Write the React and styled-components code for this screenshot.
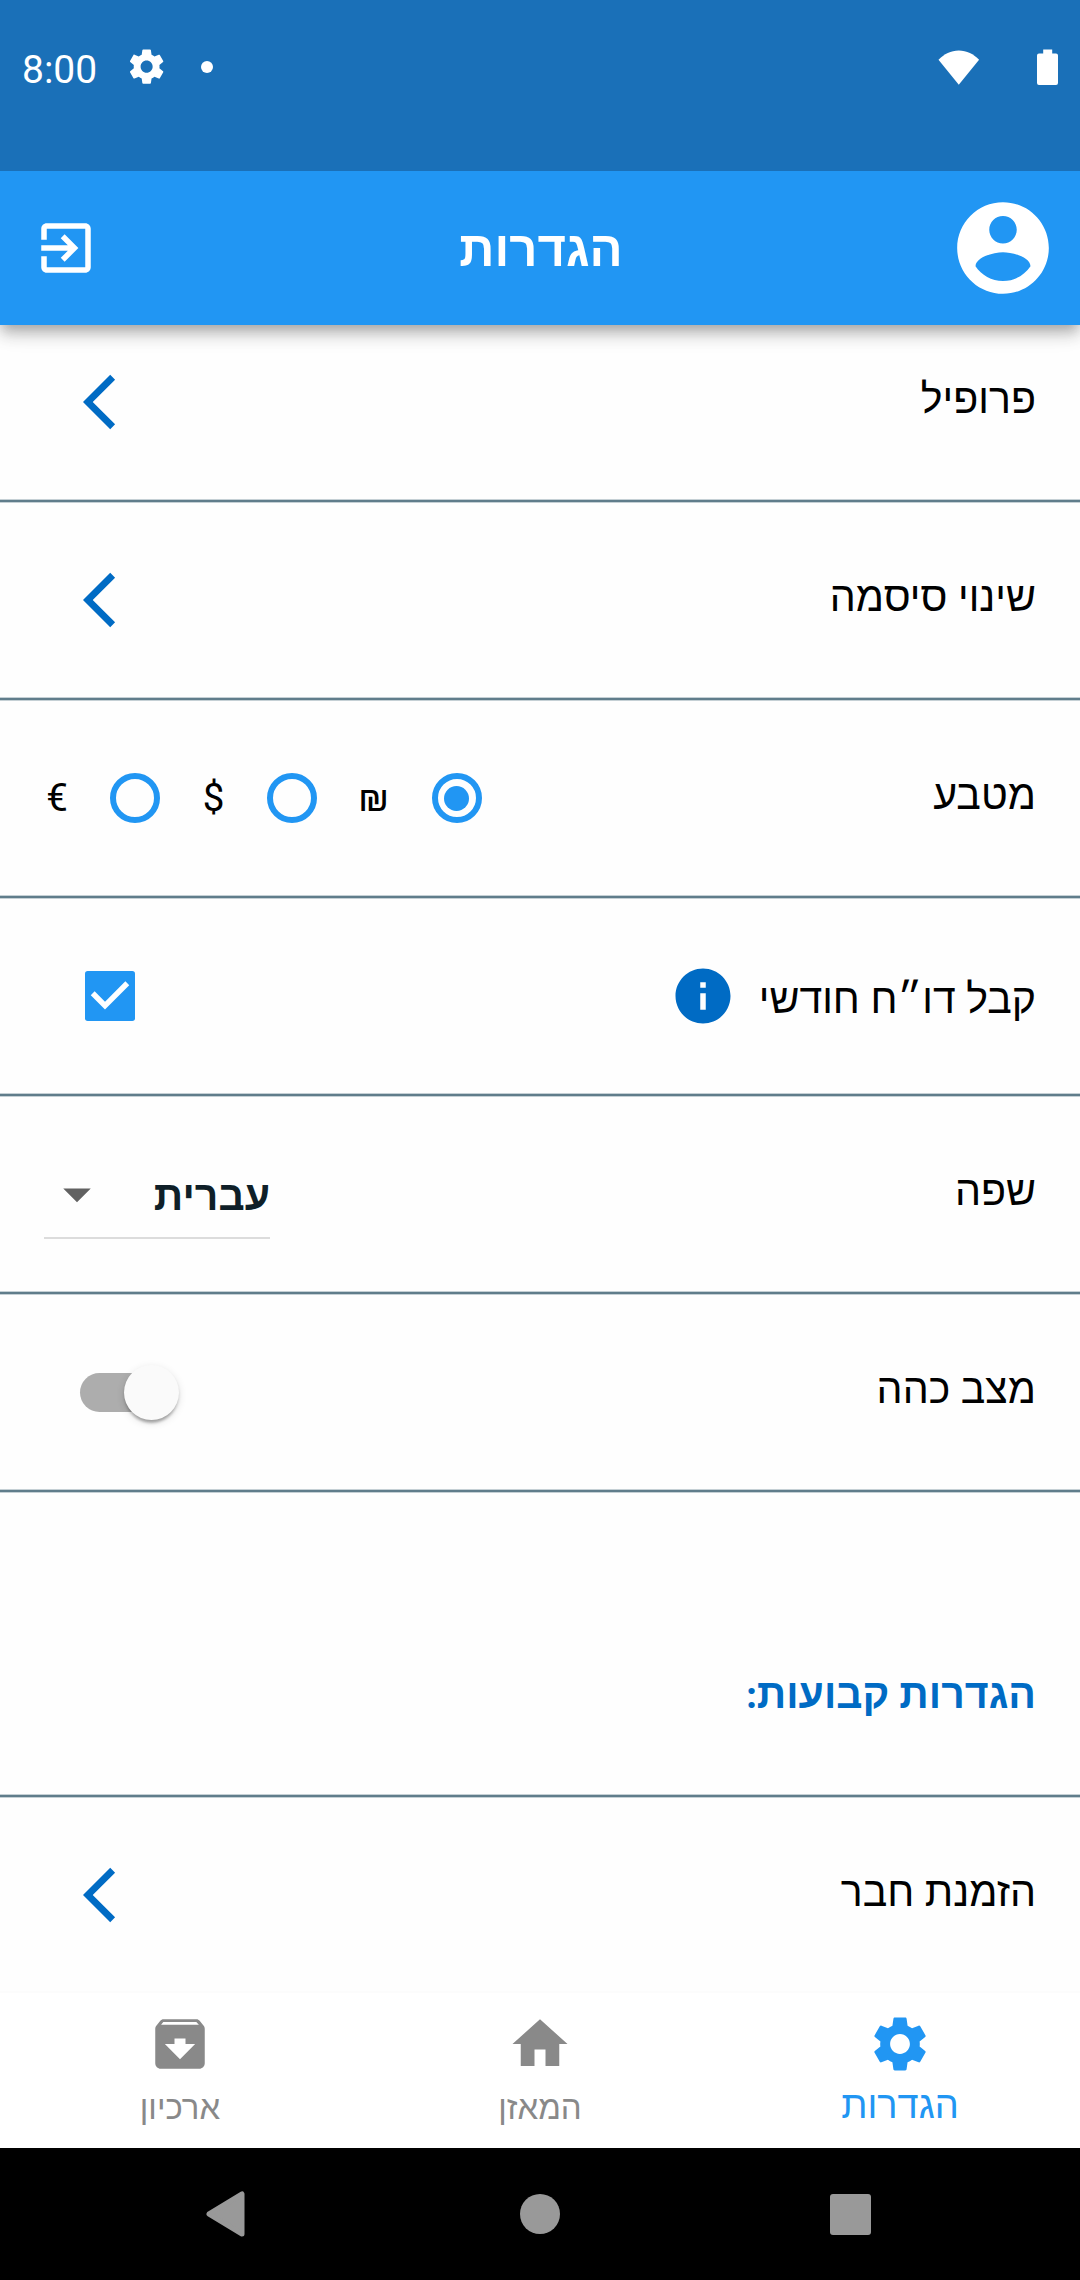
import React from "react";
import styled, { createGlobalStyle } from "styled-components";

const GlobalStyle = createGlobalStyle`
  * { box-sizing: border-box; }
  body { margin: 0; background: #fff; }
`;

const Screen = styled.div`
  width: 1080px;
  height: 2280px;
  overflow: hidden;
  display: flex;
  flex-direction: column;
  background: #fefefe;
  color: #000;
  font-family: Lato, sans-serif;
  direction: rtl;
`;

const StatusBar = styled.div`
  height: 171px;
  flex: none;
  position: relative;
  z-index: 2;
  direction: ltr;
  background: #1a70b8;
  color: #fff;
  display: flex;
  align-items: flex-start;
  justify-content: space-between;
  padding: 46px 22px 0 22px;
`;

const StatusGroup = styled.div`
  height: 42px;
  display: flex;
  align-items: center;
`;

const Clock = styled.span`
  font: 400 39px/42px Roboto, sans-serif;
  width: 104px;
  padding-top: 6px;
`;

const Dot = styled.span`
  width: 12px;
  height: 12px;
  margin-left: 34px;
  border-radius: 50%;
  background: #fff;
`;

const Icon = styled.svg`
  display: block;
  flex: none;
  width: ${(p) => p.$size || 66}px;
  height: ${(p) => p.$size || 66}px;
  fill: currentColor;
`;

const AppBar = styled.header`
  height: 154px;
  flex: none;
  z-index: 1;
  display: grid;
  grid-template-columns: 110px 1fr 110px;
  align-items: center;
  padding: 0 22px;
  background: #2196f3;
  color: #fff;
  box-shadow: 0 5.5px 11px -2.75px rgba(0, 0, 0, 0.2), 0 11px 13.75px rgba(0, 0, 0, 0.14),
    0 2.75px 27.5px rgba(0, 0, 0, 0.12);
`;

const Title = styled.h1`
  margin: 0;
  padding: 0 0 2px 2px;
  text-align: center;
  font-size: 49px;
  font-weight: 700;
  line-height: 76px;
`;

const ExitSlot = styled.div`
  display: flex;
  justify-content: flex-end;
  padding-left: 11px;
`;

const List = styled.main`
  flex: 1;
  min-height: 0;
  overflow: hidden;
  display: flex;
  flex-direction: column;

  /* The list is scrolled slightly under the app bar. */
  > :first-child {
    margin-top: -20px;
  }
`;

const Row = styled.section`
  height: 198px;
  flex: none;
  display: flex;
  align-items: center;
  justify-content: space-between;
  padding: 0 44px 4px;
  background: linear-gradient(#c5d0d5 0 1px, #607d8b 1px 3px, #c5d0d5 3px 4px) bottom / 100% 4px no-repeat;
`;

const HeadingRow = styled(Row)`
  height: 305px;
  align-items: flex-end;
  padding-bottom: 75px;
`;

const Label = styled.span`
  font-size: 41.1px;
  line-height: 60px;
  padding-bottom: 10px;
  white-space: nowrap;
`;

const Heading = styled.h2`
  margin: 0;
  font-size: 41px;
  line-height: 60px;
  font-weight: 700;
  color: #006bc4;
`;

const LabelGroup = styled.div`
  display: flex;
  align-items: center;
  gap: 23px;

  ${Label} {
    padding: 1px 0 0;
  }
`;

const Accent = styled.span`
  color: #006bc4;
  margin-left: ${(p) => p.$inset || 0}px;
`;

const RadioGroup = styled.div`
  display: flex;
  align-items: center;
`;

const Radio = styled.span`
  width: 50px;
  height: 50px;
  border: 6px solid #2196f3;
  border-radius: 50%;
  display: grid;
  place-items: center;

  &::after {
    content: "";
    width: 25px;
    height: 25px;
    border-radius: 50%;
    background: ${(p) => (p.$on ? "#2196f3" : "transparent")};
  }
`;

const Currency = styled.span`
  width: ${(p) => p.$width}px;
  margin: 0 ${(p) => p.$before}px 0 ${(p) => p.$after}px;
  text-align: center;
  font: 400 38.5px/50px Roboto, sans-serif;
`;

const Checkbox = styled.span`
  width: 50px;
  height: 50px;
  margin-left: 41px;
  border-radius: 2.75px;
  background: #2196f3;
`;

const Select = styled.div`
  width: 226px;
  height: 88px;
  margin-top: 2px;
  display: flex;
  align-items: center;
  justify-content: space-between;
  border-bottom: 2px solid #dcdcdc;
  color: #0f1f28;
`;

const SelectValue = styled.span`
  padding-top: 2px;
  font-size: 41px;
  line-height: 60px;
  font-weight: 700;
`;

const Caret = styled.span`
  color: #616161;
`;

const Track = styled.span`
  width: 91px;
  height: 39px;
  margin-left: 35.5px;
  border-radius: 20px;
  background: #adadad;
  display: flex;
  align-items: center;
  justify-content: flex-start;
`;

const Thumb = styled.span`
  width: 55px;
  height: 55px;
  flex: none;
  margin-right: -8px;
  border-radius: 50%;
  background: #fafafa;
  box-shadow: 0 5.5px 3px -2.75px rgba(0, 0, 0, 0.2), 0 2.75px 3px rgba(0, 0, 0, 0.14),
    0 2.75px 8.25px rgba(0, 0, 0, 0.12);
`;

const BottomNav = styled.nav`
  height: 157px;
  flex: none;
  display: grid;
  grid-template-columns: repeat(3, 1fr);
  border-top: 2px solid #fcfcfc;
  background: #fff;
`;

const Tab = styled.div`
  display: flex;
  flex-direction: column;
  align-items: center;
  padding-top: 18px;
  color: ${(p) => (p.$active ? "#2196f3" : "#898989")};
  font-size: ${(p) => (p.$active ? 38 : 33)}px;
  line-height: ${(p) => (p.$active ? 52 : 58)}px;
`;

const SystemNav = styled.footer`
  height: 132px;
  flex: none;
  direction: ltr;
  display: flex;
  align-items: center;
  justify-content: space-between;
  padding: 0 209px 0 206px;
  background: #000;
`;

const HomeKey = styled.span`
  width: 40px;
  height: 40px;
  border-radius: 50%;
  background: #999;
`;

const RecentKey = styled.span`
  width: 41px;
  height: 41px;
  border-radius: 3px;
  background: #999;
`;

const GEAR =
  "M19.43 12.98c.04-.32.07-.64.07-.98s-.03-.66-.07-.98l2.11-1.65c.19-.15.24-.42.12-.64l-2-3.46c-.12-.22-.39-.3-.61-.22l-2.49 1c-.52-.4-1.08-.73-1.69-.98l-.38-2.65C14.46 2.18 14.25 2 14 2h-4c-.25 0-.46.18-.49.42l-.38 2.65c-.61.25-1.17.59-1.69.98l-2.49-1c-.23-.09-.49 0-.61.22l-2 3.46c-.13.22-.07.49.12.64l2.11 1.65c-.04.32-.07.65-.07.98s.03.66.07.98l-2.11 1.65c-.19.15-.24.42-.12.64l2 3.46c.12.22.39.3.61.22l2.49-1c.52.4 1.08.73 1.69.98l.38 2.65c.03.24.24.42.49.42h4c.25 0 .46-.18.49-.42l.38-2.65c.61-.25 1.17-.59 1.69-.98l2.49 1c.23.09.49 0 .61-.22l2-3.46c.12-.22.07-.49-.12-.64l-2.11-1.65zM12 15.5c-1.93 0-3.5-1.57-3.5-3.5s1.57-3.5 3.5-3.5 3.5 1.57 3.5 3.5-1.57 3.5-3.5 3.5z";
const GEAR_NAV =
  "M19.14 12.94c.04-.3.06-.61.06-.94 0-.32-.02-.64-.07-.94l2.03-1.58c.18-.14.23-.41.12-.61l-1.92-3.32c-.12-.22-.37-.29-.59-.22l-2.39.96c-.5-.38-1.03-.7-1.62-.94l-.36-2.54c-.04-.24-.24-.41-.48-.41h-3.84c-.24 0-.43.17-.47.41l-.36 2.54c-.59.24-1.13.57-1.62.94l-2.39-.96c-.22-.08-.47 0-.59.22L2.74 8.87c-.12.21-.08.47.12.61l2.03 1.58c-.05.3-.09.63-.09.94s.02.64.07.94l-2.03 1.58c-.18.14-.23.41-.12.61l1.92 3.32c.12.22.37.29.59.22l2.39-.96c.5.38 1.03.7 1.62.94l.36 2.54c.05.24.24.41.48.41h3.84c.24 0 .44-.17.47-.41l.36-2.54c.59-.24 1.13-.56 1.62-.94l2.39.96c.22.08.47 0 .59-.22l1.92-3.32c.12-.22.07-.47-.12-.61l-2.01-1.58zM12 15.6c-1.98 0-3.6-1.62-3.6-3.6s1.62-3.6 3.6-3.6 3.6 1.62 3.6 3.6-1.62 3.6-3.6 3.6z";
const EXIT =
  "M10.09 15.59L11.5 17l5-5-5-5-1.41 1.41L12.67 11H3v2h9.67l-2.58 2.59zM19 3H5c-1.11 0-2 .9-2 2v4h2V5h14v14H5v-4H3v4c0 1.1.89 2 2 2h14c1.1 0 2-.9 2-2V5c0-1.1-.9-2-2-2z";
const ACCOUNT =
  "M12 2C6.48 2 2 6.48 2 12s4.48 10 10 10 10-4.48 10-10S17.52 2 12 2zm0 3c1.66 0 3 1.34 3 3s-1.34 3-3 3-3-1.34-3-3 1.34-3 3-3zm0 14.2c-2.5 0-4.71-1.28-6-3.22.03-1.99 4-3.08 6-3.08 1.99 0 5.97 1.09 6 3.08-1.29 1.94-3.5 3.22-6 3.22z";
const CHEVRON = "M11.67 3.87L9.9 2.1 0 12l9.9 9.9 1.77-1.77L3.54 12z";
const INFO = "M12 2C6.48 2 2 6.48 2 12s4.48 10 10 10 10-4.48 10-10S17.52 2 12 2zm1 15h-2v-6h2v6zm0-8h-2V7h2v2z";
const ARCHIVE =
  "M20.54 5.23l-1.39-1.68C18.88 3.21 18.47 3 18 3H6c-.47 0-.88.21-1.16.55L3.46 5.23C3.17 5.57 3 6.02 3 6.5V19c0 1.1.9 2 2 2h14c1.1 0 2-.9 2-2V6.5c0-.48-.17-.93-.46-1.27zM12 17.5L6.5 12H10v-2h4v2h3.5L12 17.5zM5.12 5l.81-1h12l.94 1H5.12z";
const HOME = "M10 20v-6h4v6h5v-8h3L12 3 2 12h3v8z";
const DROP_DOWN = "M7 10l5 5 5-5z";

const Glyph = ({ path, size }) => (
  <Icon viewBox="0 0 24 24" $size={size}>
    <path d={path} />
  </Icon>
);

const LinkRow = ({ children }) => (
  <Row>
    <Label>{children}</Label>
    <Accent $inset={38.5}>
      <Glyph path={CHEVRON} />
    </Accent>
  </Row>
);

export default function App() {
  return (
    <Screen>
      <GlobalStyle />
      <StatusBar>
        <StatusGroup>
          <Clock>8:00</Clock>
          <Glyph path={GEAR} size={41.25} />
          <Dot />
        </StatusGroup>
        <StatusGroup>
          <svg width="120" height="36" viewBox="0 0 120 36" fill="#fff">
            <path d="M0.500 10.800C6 5 12.900 1.500 20.800 1.500s14.900 3.500 20.300 9.300L20.800 35.800z" />
            <path d="M101 4.500h4.200V0.500h9V4.500h3.800q2 0 2 2v27.500q0 2-2 2h-17q-2 0-2-2V6.500q0-2 2-2z" />
          </svg>
        </StatusGroup>
      </StatusBar>
      <AppBar>
        <Glyph path={ACCOUNT} size={110} />
        <Title>הגדרות</Title>
        <ExitSlot>
          <Glyph path={EXIT} />
        </ExitSlot>
      </AppBar>
      <List>
        <LinkRow>פרופיל</LinkRow>
        <LinkRow>שינוי סיסמה</LinkRow>
        <Row>
          <Label>מטבע</Label>
          <RadioGroup>
            <Radio $on />
            <Currency $width={28} $before={43} $after={44}>₪</Currency>
            <Radio />
            <Currency $width={22} $before={42} $after={42.5}>$</Currency>
            <Radio />
            <Currency $width={22} $before={42} $after={2}>€</Currency>
          </RadioGroup>
        </Row>
        <Row>
          <LabelGroup>
            <Label>קבל דו״ח חודשי</Label>
            <Accent>
              <Glyph path={INFO} />
            </Accent>
          </LabelGroup>
          <Checkbox>
            <svg width="50" height="50" viewBox="0 0 50 50" fill="none" stroke="#fff" strokeWidth="5.5">
              <path d="M7.700 22.300L20 34.600L42.300 12.300" />
            </svg>
          </Checkbox>
        </Row>
        <Row>
          <Label>שפה</Label>
          <Select>
            <SelectValue>עברית</SelectValue>
            <Caret>
              <Glyph path={DROP_DOWN} />
            </Caret>
          </Select>
        </Row>
        <Row>
          <Label>מצב כהה</Label>
          <Track>
            <Thumb />
          </Track>
        </Row>
        <HeadingRow>
          <Heading>הגדרות קבועות:</Heading>
        </HeadingRow>
        <LinkRow>הזמנת חבר</LinkRow>
      </List>
      <BottomNav>
        <Tab $active>
          <Glyph path={GEAR_NAV} />
          הגדרות
        </Tab>
        <Tab>
          <Glyph path={HOME} />
          המאזן
        </Tab>
        <Tab>
          <Glyph path={ARCHIVE} />
          ארכיון
        </Tab>
      </BottomNav>
      <SystemNav>
        <svg width="44" height="46" viewBox="0 0 44 46">
          <path d="M3 23L36 3V43Z" fill="#999" stroke="#999" strokeWidth="5" strokeLinejoin="round" />
        </svg>
        <HomeKey />
        <RecentKey />
      </SystemNav>
    </Screen>
  );
}
